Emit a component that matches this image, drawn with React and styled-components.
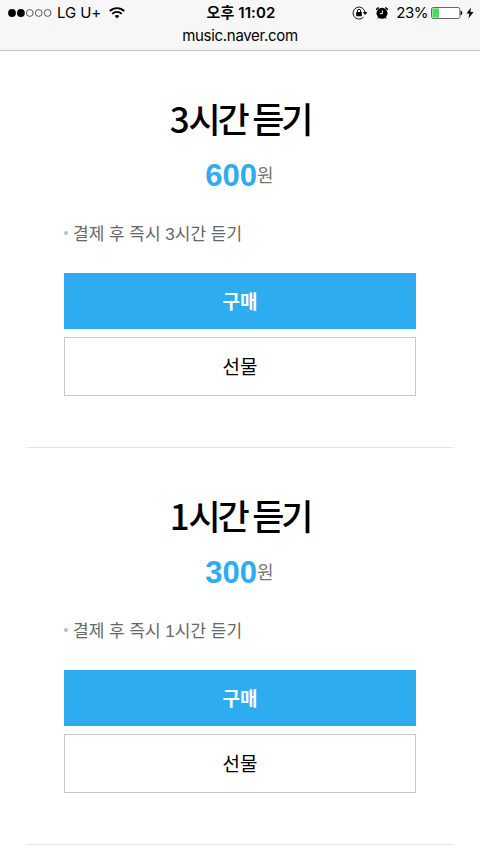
import React from "react";
import styled, { createGlobalStyle } from "styled-components";

const tickets = [
  { id: 1, title: "3시간 듣기", price: 600, description: "결제 후 즉시 3시간 듣기" },
  { id: 2, title: "1시간 듣기", price: 300, description: "결제 후 즉시 1시간 듣기" },
];

function SignalIcon() {
  return (
    <svg width="44" height="10" viewBox="0 0 44 10">
      {[0, 1, 2, 3, 4].map((dot) => (
        <circle
          key={dot}
          cx={4 + dot * 8.9}
          cy="5"
          r={dot < 2 ? 3.9 : 3.4}
          fill={dot < 2 ? "#000" : "none"}
          stroke={dot < 2 ? "none" : "#333"}
          strokeWidth="0.8"
        />
      ))}
    </svg>
  );
}

function WifiIcon() {
  return (
    <svg width="16" height="12" viewBox="0 0 16 12" fill="none" stroke="#000">
      <path d="M0.8 4.1a10.2 10.2 0 0 1 14.4 0" strokeWidth="1.9" />
      <path d="M3.3 6.9a6.6 6.6 0 0 1 9.4 0" strokeWidth="1.8" />
      <path d="M8 11.4L5.7 9.1a3.3 3.3 0 0 1 4.6 0z" fill="#000" stroke="none" />
    </svg>
  );
}

function LockIcon() {
  return (
    <svg width="16" height="14" viewBox="0 0 16 14" fill="none" stroke="#000">
      <path d="M13 6.4a6 6 0 1 0-1.5 4.7" strokeWidth="0.9" />
      <path d="M10.8 6h4.6l-2.3 2.9z" fill="#000" stroke="none" />
      <rect x="4.2" y="6.1" width="5.6" height="4.1" rx="0.4" fill="#000" stroke="none" />
      <path d="M5.4 6.4V4.9a1.6 1.6 0 0 1 3.2 0v1.5" strokeWidth="1" />
    </svg>
  );
}

function AlarmIcon() {
  return (
    <svg width="14" height="14" viewBox="0 0 14 14" fill="none">
      <circle cx="7" cy="7.3" r="5.5" fill="#000" />
      <path d="M1.6 3.3L3.2 1.9M10.8 1.9l1.6 1.4" stroke="#000" strokeWidth="1.5" strokeLinecap="round" />
      <path d="M3.4 11.6l-.5.7M10.6 11.6l.5.7" stroke="#000" strokeWidth="1" strokeLinecap="round" />
      <path d="M7.4 4.4v3.2H4.9" stroke="#fff" strokeWidth="1" />
    </svg>
  );
}

function BatteryIcon() {
  return (
    <svg width="32" height="12" viewBox="0 0 32 12">
      <rect x="0.5" y="0.5" width="28.4" height="11" rx="1.8" fill="#fff" stroke="#666" />
      <path d="M1.4 1.4h6.6v9.2H1.4z" fill="#4cd964" />
      <path d="M29.9 4c1.5.2 1.5 3.8 0 4z" fill="#000" stroke="#000" strokeWidth="0.5" />
    </svg>
  );
}

function BoltIcon() {
  return (
    <svg width="8" height="12" viewBox="0 0 8 12">
      <path d="M5 0.5L0.5 6.6h2.9L2.5 11.4 7.5 5H4.4z" fill="#000" />
    </svg>
  );
}

function Ticket({ title, price, description }) {
  return (
    <T.Section>
      <T.Title>{title}</T.Title>
      <T.Price>
        {price}
        <T.Unit>원</T.Unit>
      </T.Price>
      <T.Description>{description}</T.Description>
      <T.Buttons>
        <T.Button $primary>구매</T.Button>
        <T.Button>선물</T.Button>
      </T.Buttons>
    </T.Section>
  );
}

function App() {
  return (
    <>
      <GlobalStyle />
      <H.Header>
        <H.Status>
          <H.Side>
            <SignalIcon />
            <H.Carrier>LG U+</H.Carrier>
            <WifiIcon />
          </H.Side>
          <H.Time>오후 11:02</H.Time>
          <H.Side $end>
            <H.Indicators>
              <LockIcon />
              <AlarmIcon />
            </H.Indicators>
            <H.Percent>23%</H.Percent>
            <H.Power>
              <BatteryIcon />
              <BoltIcon />
            </H.Power>
          </H.Side>
        </H.Status>
        <H.Address>music.naver.com</H.Address>
      </H.Header>
      <main>
        {tickets.map((ticket) => (
          <Ticket key={ticket.id} {...ticket} />
        ))}
      </main>
    </>
  );
}

const GlobalStyle = createGlobalStyle`
  * {
    box-sizing: border-box;
  }

  body {
    margin: 0;
    background: #fff;
    color: #000;
    font-family: "Liberation Sans", "Noto Sans CJK KR", sans-serif;
    overflow: hidden;
  }

  svg {
    display: block;
    flex-shrink: 0;
  }
`;

//H는 Header
const H = {
  Header: styled.header`
    height: 51px;
    background: #f7f7f7;
    border-bottom: 1px solid #c4c4c4;
    font-family: Inter, "Noto Sans CJK KR", sans-serif;
  `,
  Status: styled.div`
    display: grid;
    grid-template-columns: 1fr auto 1fr;
    align-items: center;
    height: 26px;
    padding: 0 6px 0 8px;
  `,
  Side: styled.div`
    display: flex;
    align-items: center;
    justify-content: ${({ $end }) => ($end ? "flex-end" : "flex-start")};
  `,
  Carrier: styled.span`
    width: 52px;
    padding-left: 5px;
    margin-right: 5px;
    font-size: 15px;
    line-height: 26px;
    letter-spacing: -0.1px;
    white-space: nowrap;
  `,
  Time: styled.span`
    font-size: 15px;
    line-height: 26px;
    font-weight: 600;
    letter-spacing: 0.1px;
  `,
  Indicators: styled.div`
    display: flex;
    align-items: center;
    gap: 7px;
  `,
  Percent: styled.span`
    margin: 0 3px 0 7px;
    font-size: 15px;
    line-height: 26px;
    letter-spacing: -0.5px;
  `,
  Power: styled.div`
    display: flex;
    align-items: center;
    gap: 3px;
  `,
  Address: styled.p`
    margin: 0;
    font-size: 15px;
    line-height: 19px;
    letter-spacing: -0.3px;
    text-align: center;
  `,
};

//T는 Ticket
const T = {
  Section: styled.section`
    display: flex;
    flex-direction: column;
    height: 397px;
    margin: 0 26px;
    padding: 43px 38px 0;
    border-bottom: 1px solid #e6e6e6;
  `,
  Title: styled.h2`
    margin: 0;
    font-family: "Noto Sans CJK KR", sans-serif;
    font-size: 35px;
    line-height: 48px;
    font-weight: 500;
    letter-spacing: -3.2px;
    word-spacing: 1px;
    text-align: center;

    &::first-letter {
      letter-spacing: -1.2px;
    }
  `,
  Price: styled.p`
    display: flex;
    align-items: center;
    justify-content: center;
    height: 42px;
    margin: 13px 1px 0 0;
    color: #2eacf0;
    font-size: 31px;
    font-weight: 700;
  `,
  Unit: styled.span`
    padding-bottom: 4px;
    color: #777;
    font-size: 18px;
    font-weight: 400;
  `,
  Description: styled.p`
    display: flex;
    align-items: center;
    height: 22px;
    margin: 24px 0 0;
    color: #666;
    font-size: 17px;
    white-space: nowrap;

    &::before {
      content: "";
      width: 4px;
      height: 4px;
      margin: 1px 5px 0 0;
      border-radius: 50%;
      background: #bbb;
    }
  `,
  Buttons: styled.div`
    display: flex;
    flex-direction: column;
    gap: 8px;
    margin-top: 30px;
  `,
  Button: styled.button`
    height: ${({ $primary }) => ($primary ? "56px" : "59px")};
    padding: 0 0 2px;
    border: ${({ $primary }) => ($primary ? "none" : "1px solid #c8c8c8")};
    background: ${({ $primary }) => ($primary ? "#2eacf0" : "#fff")};
    color: ${({ $primary }) => ($primary ? "#fff" : "#000")};
    font-family: "Noto Sans CJK KR", sans-serif;
    font-size: 19px;
    font-weight: ${({ $primary }) => ($primary ? 700 : 400)};
  `,
};

export default App;
